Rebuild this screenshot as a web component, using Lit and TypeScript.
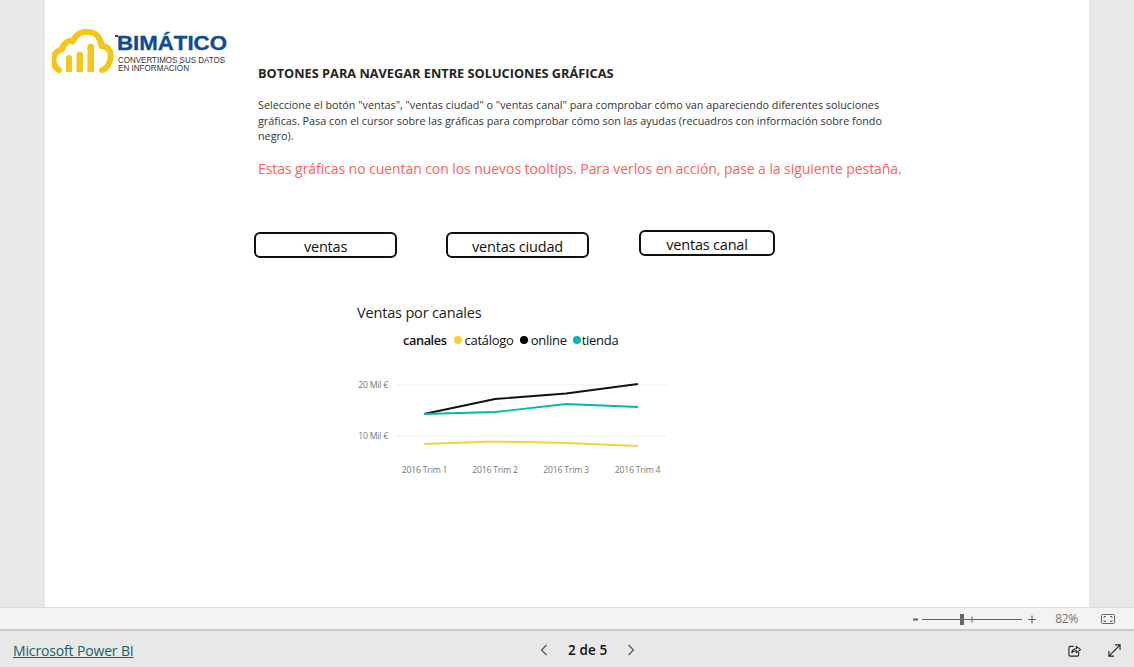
import { LitElement, html, css, svg } from "lit";
import { customElement } from "lit/decorators.js";

const points = (p: number[][]) => p.map((c) => c.join(",")).join(" ");

@customElement("app-root")
export class AppRoot extends LitElement {
  static styles = css`
    :host {
      display: flex;
      flex-direction: column;
      width: 1134px;
      height: 667px;
      background: #e8e8e8;
      font-family: "Open Sans", "Noto Sans", sans-serif;
      color: #252423;
      overflow: hidden;
    }
    .stage { flex: 1; min-height: 0; padding: 0 45px; }
    .canvas {
      background: #fff;
      height: 607px;
      width: 1044px;
      display: grid;
      grid-template-columns: 213px 1fr;
    }
    .logo { padding: 28px 0 0 7px; }
    .logo svg { display: block; }
    .logo text { font-family: "Liberation Sans", sans-serif; }
    .content { padding-top: 65px; min-width: 0; }
    h1 {
      margin: 0;
      font-size: 12.75px;
      line-height: 17px;
      font-weight: 700;
      color: #252423;
      white-space: nowrap;
    }
    .intro {
      margin: 15px 0 0;
      font-size: 10.8px;
      line-height: 15.5px;
      color: #333;
      white-space: nowrap;
    }
    .note {
      margin: 15px 0 0;
      font-size: 14px;
      line-height: 20px;
      letter-spacing: -0.07px;
      color: #fd625e;
      white-space: nowrap;
    }
    .buttons {
      display: flex;
      align-items: flex-start;
      margin: 51px 0 0 -4px;
      height: 28px;
    }
    .btn {
      box-sizing: border-box;
      height: 26px;
      border: 2px solid #111;
      border-radius: 6px;
      background: #fff;
      font: inherit;
      font-size: 14.5px;
      line-height: 20px;
      letter-spacing: -0.2px;
      padding: 3px 0 0;
      color: #111;
      text-align: center;
      margin-top: 2px;
    }
    .b1 { width: 143px; margin-right: 49px; }
    .b2 { width: 143px; margin-right: 50px; }
    .b3 { width: 136px; margin-top: 0; }
    .visual { margin: 44px 0 0 99px; width: 320px; }
    .vt {
      font-size: 14.5px;
      line-height: 22px;
      letter-spacing: -0.17px;
      color: #222;
    }
    .legend {
      display: flex;
      align-items: center;
      margin: 6px 0 0 46px;
      height: 20px;
      font-size: 13px;
      letter-spacing: -0.27px;
      color: #111;
      white-space: nowrap;
    }
    .legend b { font-weight: 600; margin-right: 7px; font-size: 12.75px; letter-spacing: -0.4px; }
    .item { display: flex; align-items: center; gap: 3px; margin-right: 6px; }
    .item.tight { gap: 1px; }
    .dot { width: 8px; height: 8px; border-radius: 50%; flex: none; }
    .d1 { background: #f2c80f; opacity: 0.85; }
    .d2 { background: #000; }
    .d3 { background: #01b8aa; }
    .chart { display: block; margin: 22px 0 0 -3px; }
    .chart text { font-family: "Open Sans", sans-serif; font-size: 8.7px; letter-spacing: -0.22px; fill: #777; }
    .zoombar {
      box-sizing: border-box;
      height: 24px;
      background: #f3f3f3;
      border-top: 1px solid #ddd;
      border-bottom: 2px solid #ccc;
      display: flex;
      align-items: center;
      justify-content: flex-end;
      padding-right: 19px;
      font-size: 12px;
      color: #777;
    }
    .zoombar svg { display: block; }
    .pct { margin: 0 23px 0 18px; letter-spacing: -0.3px; }
    .footer {
      box-sizing: border-box;
      height: 36px;
      display: grid;
      grid-template-columns: 527px auto 1fr;
      align-items: center;
      padding: 2px 13px 0 13px;
    }
    .brand {
      font-size: 14px;
      letter-spacing: -0.15px;
      color: #116466;
      text-decoration: underline;
    }
    .pager { display: flex; align-items: center; gap: 20px; font-size: 13.5px; letter-spacing: 0.12px; font-weight: 600; color: #111; }
    .pager svg, .actions svg { display: block; }
    .actions { display: flex; justify-content: flex-end; gap: 27px; }
  `;

  render() {
    return html`
      <div class="stage">
        <div class="canvas">
          <div class="logo">
            <svg width="190" height="50" viewBox="52 28 190 50" aria-label="Bimático">
              <path d="M59 70 C50.5 65 52 51 62 49.5 C63 43 69 40 73 41.5 C76 33 84 31 88 32 C96 32 101 38 101.5 46 C110 46 113 55 109 63 C107.5 67 105 69 102 70" fill="none" stroke="#f5c518" stroke-width="6" stroke-linecap="round" stroke-linejoin="round"/>
              <path d="M66 72 V58 a3 3 0 0 1 6 0 V72 Z M76.5 72 V55 a3.25 3.25 0 0 1 6.5 0 V72 Z M87.5 72 V47 a3.25 3.25 0 0 1 6.5 0 V72 Z" fill="#f5c518"/>
              <rect x="115" y="35" width="3" height="2" fill="#0f4c93"/>
              <text x="117" y="50" font-size="21" font-weight="700" fill="#0f4c93" stroke="#0f4c93" stroke-width="0.35" textLength="110" lengthAdjust="spacingAndGlyphs">BIMÁTICO</text>
              <text x="118" y="62.5" font-size="8.6" fill="#333" textLength="107" lengthAdjust="spacingAndGlyphs">CONVERTIMOS SUS DATOS</text>
              <text x="118" y="71" font-size="8.6" fill="#333" textLength="71" lengthAdjust="spacingAndGlyphs">EN INFORMACIÓN</text>
            </svg>
          </div>
          <div class="content">
            <h1>BOTONES PARA NAVEGAR ENTRE SOLUCIONES GRÁFICAS</h1>
            <p class="intro">
              Seleccione el botón "ventas", "ventas ciudad" o "ventas canal" para comprobar cómo van apareciendo diferentes soluciones<br />
              gráficas. Pasa con el cursor sobre las gráficas para comprobar cómo son las ayudas (recuadros con información sobre fondo<br />
              negro).
            </p>
            <p class="note">Estas gráficas no cuentan con los nuevos tooltips. Para verlos en acción, pase a la siguiente pestaña.</p>
            <div class="buttons">
              <button class="btn b1">ventas</button>
              <button class="btn b2">ventas ciudad</button>
              <button class="btn b3">ventas canal</button>
            </div>
            <div class="visual">
              <div class="vt">Ventas por canales</div>
              <div class="legend">
                <b>canales</b>
                <span class="item"><i class="dot d1"></i>catálogo</span>
                <span class="item"><i class="dot d2"></i>online</span>
                <span class="item tight"><i class="dot d3"></i>tienda</span>
              </div>
              ${this.chart()}
            </div>
          </div>
        </div>
      </div>
      <div class="zoombar">
        <svg width="124" height="14" viewBox="0 0 124 14" aria-hidden="true">
          <path d="M0 7.5H5" stroke="#666" stroke-width="2"/>
          <path d="M9 7.5H109" stroke="#666"/>
          <path d="M59 4.5V10.5" stroke="#666"/>
          <rect x="47" y="2" width="4" height="11" fill="#666"/>
          <path d="M115 7.5H123M119 3.5V11.5" stroke="#666" stroke-width="1.2"/>
        </svg>
        <span class="pct">82%</span>
        <svg width="14" height="10" viewBox="0 0 14 10" aria-hidden="true">
          <rect x="0.5" y="0.5" width="13" height="9" rx="1" fill="none" stroke="#666"/>
          <path d="M3 4V2.5H5M9 2.5H11V4M3 6V7.5H5M9 7.5H11V6" fill="none" stroke="#666"/>
        </svg>
      </div>
      <div class="footer">
        <span><span class="brand">Microsoft Power BI</span></span>
        <div class="pager">
          <svg width="8" height="12" viewBox="0 0 8 12" aria-hidden="true"><path d="M6.5 1L1.5 6L6.5 11" fill="none" stroke="#555" stroke-width="1.2"/></svg>
          <span>2 de 5</span>
          <svg width="8" height="12" viewBox="0 0 8 12" aria-hidden="true"><path d="M1.5 1L6.5 6L1.5 11" fill="none" stroke="#555" stroke-width="1.2"/></svg>
        </div>
        <div class="actions">
          <svg width="13" height="13" viewBox="0 0 14 14" aria-hidden="true">
            <path d="M6 2.5H2.5a1.5 1.5 0 0 0-1.5 1.5V11.5a1.5 1.5 0 0 0 1.5 1.5H10a1.5 1.5 0 0 0 1.5-1.5V9" fill="none" stroke="#222" stroke-width="1.2"/>
            <path d="M4 9.5C4.3 6.5 6.3 5 9 5V2.5L13.5 6L9 9.5V7.3C7 7.3 5.2 8 4 9.5Z" fill="none" stroke="#222" stroke-width="1.1" stroke-linejoin="round"/>
          </svg>
          <svg width="13" height="13" viewBox="0 0 14 14" aria-hidden="true">
            <path d="M1 13L13 1M7.5 1H13V6.5M1 7.5V13H6.5" fill="none" stroke="#222" stroke-width="1.2"/>
          </svg>
        </div>
      </div>
    `;
  }

  private chart() {
    const ox = 354, oy = 372;
    const shift = (p: number[][]) => points(p.map(([x, y]) => [x - ox, y - oy]));
    const series = [
      { c: "#f5d33f", p: [[424, 444], [495, 441.5], [566, 443], [638, 446]] },
      { c: "#111", p: [[424, 414], [495, 399], [566, 393.5], [638, 384]] },
      { c: "#01b8aa", p: [[424, 414], [495, 412], [566, 404], [638, 407]] },
    ];
    const labels = [70.5, 141, 212, 283.5];
    return html`<svg class="chart" width="320" height="108" viewBox="0 0 320 108" role="img">
      ${[13, 64].map((y) => svg`<line x1="42" x2="313" y1=${y} y2=${y} stroke="#f0f0f0" stroke-width="1"/>`)}
      ${series.map((s) => svg`<polyline points=${shift(s.p)} fill="none" stroke=${s.c} stroke-width="1.8"/>`)}
      <text x="34" y="16" text-anchor="end">20 Mil €</text>
      <text x="34" y="67" text-anchor="end">10 Mil €</text>
      ${labels.map((x, i) => svg`<text x=${x} y="101" text-anchor="middle">2016 Trim ${i + 1}</text>`)}
    </svg>`;
  }
}
